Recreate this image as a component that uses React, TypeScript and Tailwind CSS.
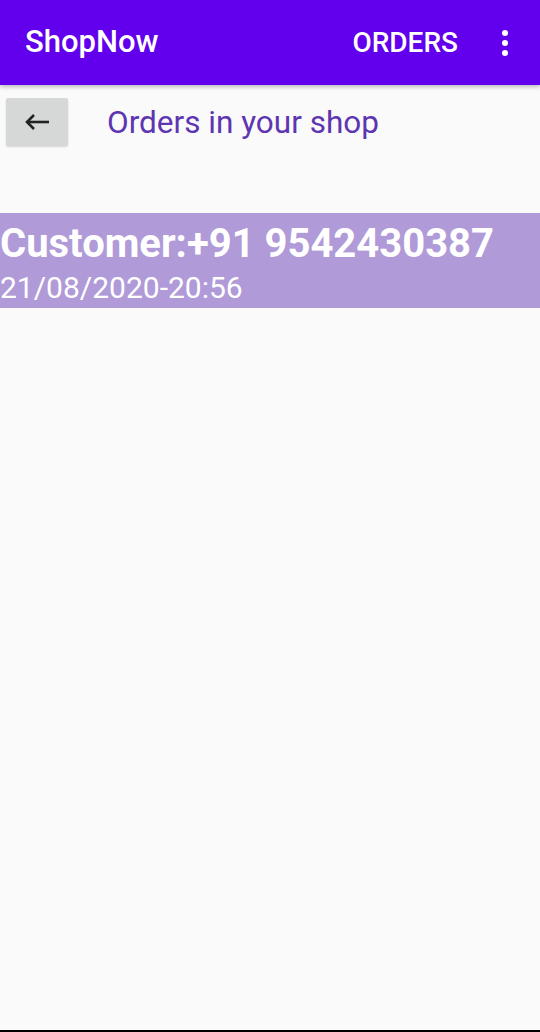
import React from "react";

const App = () => {
  return (
    <div className="w-[540px] h-[1032px] flex flex-col bg-[#fafafa] font-['Roboto',sans-serif] overflow-hidden">
      <div className="h-[85px] bg-[#6200ee] flex items-center pl-[25px] pr-[32px] shadow-[0_2px_4px_rgba(0,0,0,0.25)] relative z-10">
        <span className="text-white text-[31px] font-medium flex-1">ShopNow</span>
        <span className="text-white text-[28px] font-medium mr-[44px]">ORDERS</span>
        <div className="flex flex-col gap-[4px] items-center">
          <span className="w-[6px] h-[6px] rounded-full bg-white"></span>
          <span className="w-[6px] h-[6px] rounded-full bg-white"></span>
          <span className="w-[6px] h-[6px] rounded-full bg-white"></span>
        </div>
      </div>
      <div className="flex items-center mt-[13px] px-[6px]">
        <div className="w-[62px] h-[48px] bg-[#d6d7d7] rounded-[2px] shadow-[0_1px_2px_rgba(0,0,0,0.15)] flex items-center justify-center">
          <svg width="28" height="20" viewBox="0 0 28 20" fill="none" stroke="#222" strokeWidth="2.6">
            <path d="M26 10H4" />
            <path d="M11 3L4 10L11 17" />
          </svg>
        </div>
        <span className="ml-[39px] mt-[2px] text-[31.5px] text-[#5e35b1] leading-none">Orders in your shop</span>
      </div>
      <div className="mt-[67px] h-[95px] bg-[#b09ad8] flex flex-col pt-[8px] text-white">
        <span className="text-[40px] font-bold leading-[46px]">Customer:+91 9542430387</span>
        <span className="text-[30px] leading-[36px] mt-[3px]">21/08/2020-20:56</span>
      </div>
      <div className="flex-1"></div>
      <div className="h-[2px] bg-black"></div>
    </div>
  );
};

export default App;
